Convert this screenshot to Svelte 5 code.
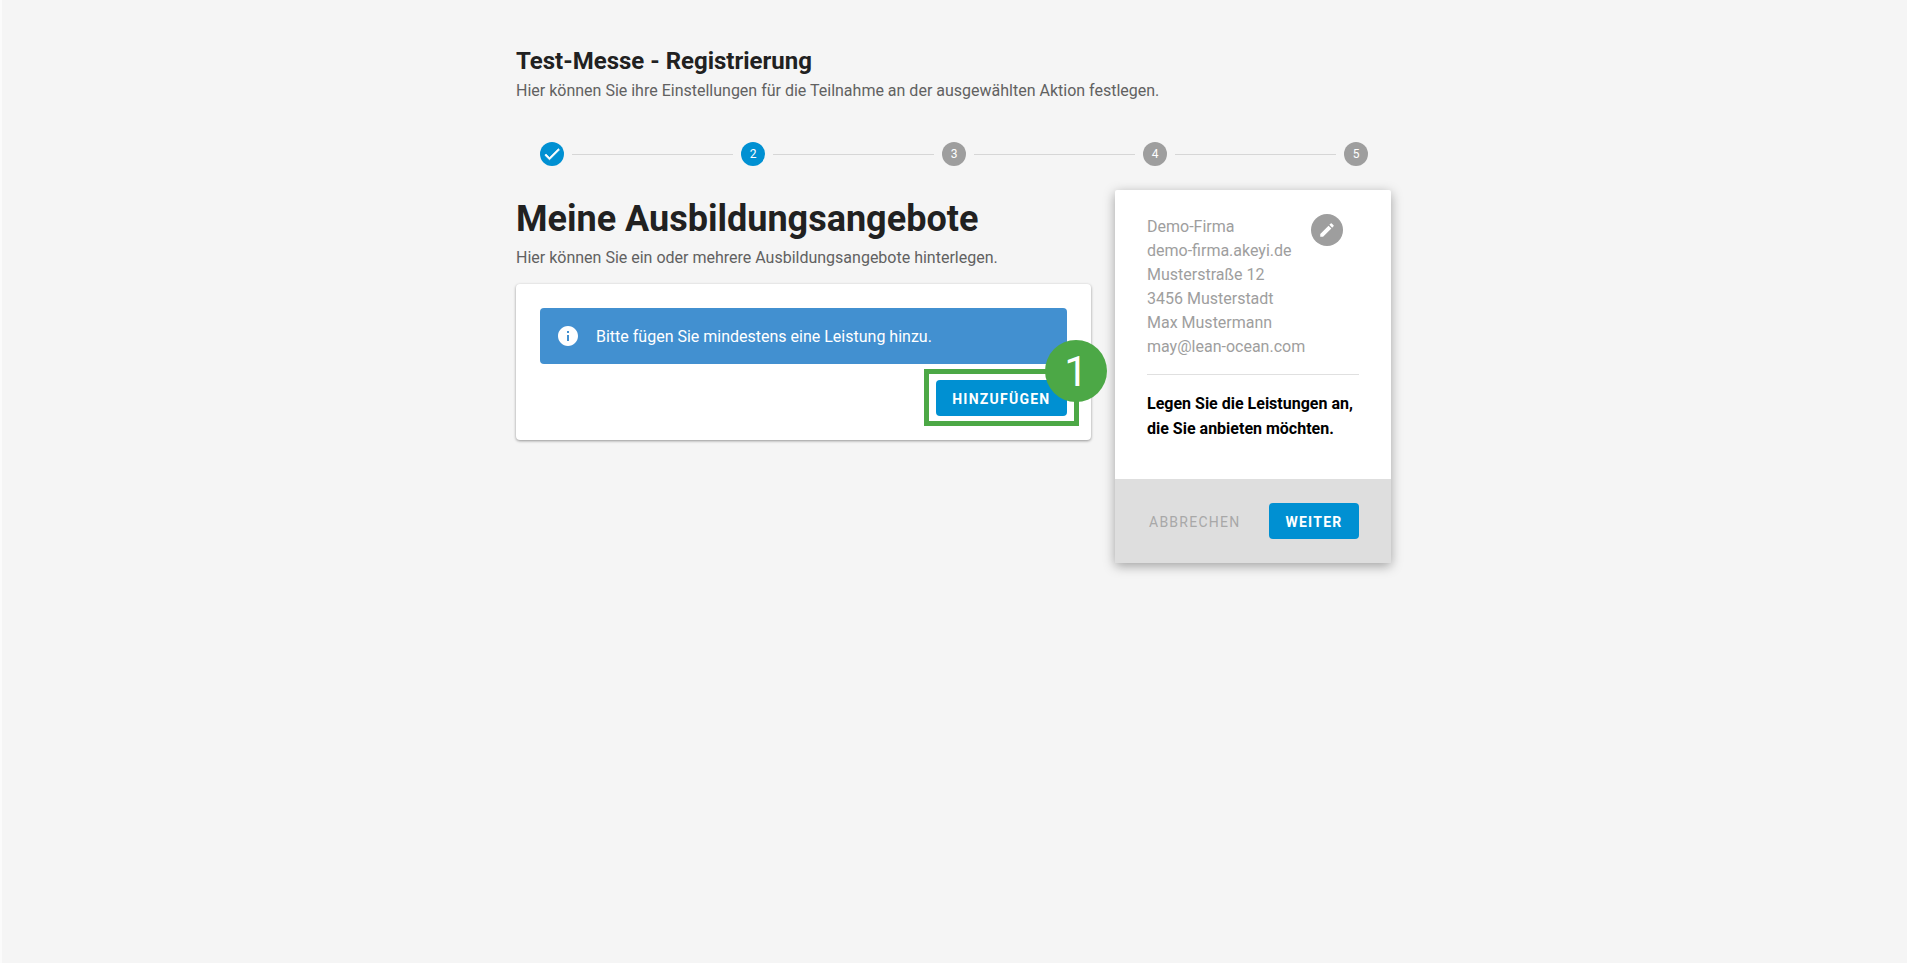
<script lang="ts">
    const steps = [
        { label: '1', done: true },
        { label: '2', active: true },
        { label: '3' },
        { label: '4' },
        { label: '5' }
    ];

    const company = [
        'Demo-Firma',
        'demo-firma.akeyi.de',
        'Musterstraße 12',
        '3456 Musterstadt',
        'Max Mustermann',
        'may@lean-ocean.com'
    ];
</script>

<div class="page">
    <main class="content">
        <header class="head">
            <h2>Test-Messe - Registrierung</h2>
            <p>Hier können Sie ihre Einstellungen für die Teilnahme an der ausgewählten Aktion festlegen.</p>
        </header>

        <ol class="stepper">
            {#each steps as step, i}
                {#if i > 0}<li class="line"></li>{/if}
                <li class="step" class:on={step.done || step.active}>
                    {#if step.done}
                        <svg viewBox="0 0 24 24" width="20" height="20"><path fill="#fff" stroke="#fff" stroke-width=".8" d="M9 16.17 4.83 12l-1.42 1.41L9 19 21 7l-1.41-1.41z"/></svg>
                    {:else}
                        {step.label}
                    {/if}
                </li>
            {/each}
        </ol>

        <div class="columns">
            <section class="left">
                <h1>Meine Ausbildungsangebote</h1>
                <p class="sub">Hier können Sie ein oder mehrere Ausbildungsangebote hinterlegen.</p>

                <div class="card">
                    <div class="alert">
                        <svg viewBox="0 0 24 24" width="24" height="24"><path fill="#fff" d="M12 2C6.48 2 2 6.48 2 12s4.48 10 10 10 10-4.48 10-10S17.52 2 12 2zm1 15h-2v-6h2v6zm0-8h-2V7h2v2z"/></svg>
                        <span>Bitte fügen Sie mindestens eine Leistung hinzu.</span>
                    </div>
                    <div class="actions">
                        <div class="marker">
                            <button class="btn">Hinzufügen</button>
                            <span class="badge">1</span>
                        </div>
                    </div>
                </div>
            </section>

            <aside class="side">
                <div class="side-body">
                    <div class="address">
                        {#each company as row}
                            <div>{row}</div>
                        {/each}
                        <span class="edit">
                            <svg viewBox="0 0 24 24" width="18" height="18"><path fill="#fff" d="M3 17.25V21h3.75L17.81 9.94l-3.75-3.75L3 17.25zM20.71 7.04a1 1 0 0 0 0-1.41l-2.34-2.34a1 1 0 0 0-1.41 0l-1.83 1.83 3.75 3.75 1.83-1.83z"/></svg>
                        </span>
                    </div>
                    <hr />
                    <p class="hint">Legen Sie die Leistungen an, die Sie anbieten möchten.</p>
                </div>
                <div class="side-foot">
                    <button class="btn flat">Abbrechen</button>
                    <button class="btn">Weiter</button>
                </div>
            </aside>
        </div>
    </main>
</div>

<style>
    :global(body) {
        margin: 0;
        background: #f5f5f5;
    }

    .page {
        min-height: 963px;
        box-sizing: border-box;
        display: flex;
        justify-content: center;
        font-family: Roboto, "Liberation Sans", sans-serif;
        color: #212121;
        font-size: 16px;
        border-left: 2px solid #fbfbfb;
    }

    .content {
        width: 875px;
        margin-right: 2px;
        padding-top: 46px;
    }

    .head h2 {
        margin: 0;
        font-size: 24px;
        font-weight: 700;
        line-height: 30px;
    }

    .head p {
        margin: 5px 0 0;
        line-height: 20px;
        color: #616161;
    }

    .stepper {
        list-style: none;
        margin: 41px 0 0;
        padding: 0 23px 0 24px;
        display: flex;
        align-items: center;
        gap: 8px;
    }

    .step {
        width: 24px;
        height: 24px;
        border-radius: 50%;
        background: #9e9e9e;
        color: #fff;
        font-size: 12px;
        display: flex;
        align-items: center;
        justify-content: center;
        flex: none;
    }

    .step.on {
        background: #0090d2;
    }

    .line {
        flex: 1;
        height: 1px;
        background: #d6d6d6;
    }

    .columns {
        display: flex;
        align-items: flex-start;
        justify-content: space-between;
        margin-top: 24px;
    }

    .left {
        width: 575px;
    }

    h1 {
        margin: 7px 0 0;
        font-size: 36px;
        font-weight: 700;
        line-height: 44px;
    }

    .sub {
        margin: 5px 0 0;
        line-height: 24px;
        color: #616161;
    }

    .card {
        margin-top: 14px;
        background: #fff;
        border-radius: 4px;
        padding: 24px;
        box-shadow: 0 1px 3px rgba(0, 0, 0, .4);
    }

    .alert {
        display: flex;
        align-items: center;
        gap: 16px;
        height: 56px;
        padding: 0 16px;
        background: #4290d0;
        border-radius: 4px;
        color: #fff;
    }

    .actions {
        display: flex;
        justify-content: flex-end;
        margin-top: 16px;
    }

    .marker {
        display: flex;
        position: relative;
    }

    /* green frame sits over the button */
    .marker::before {
        content: '';
        position: absolute;
        inset: -11px -12px -10px -12px;
        border: 5px solid #4ca846;
        pointer-events: none;
    }

    .badge {
        position: absolute;
        right: -40px;
        top: -40px;
        width: 62px;
        height: 62px;
        border-radius: 50%;
        background: #4ca846;
        color: #fff;
        font-size: 42px;
        display: flex;
        align-items: center;
        justify-content: center;
    }

    .btn {
        height: 36px;
        border: 0;
        border-radius: 4px;
        padding: 1px 16.5px 0;
        background: #0090d2;
        color: #fff;
        font: 700 14px Roboto, sans-serif;
        letter-spacing: 1.25px;
        text-transform: uppercase;
    }

    .btn.flat {
        padding: 1px 2px 0;
        background: none;
        color: #a8a8a8;
        font-weight: 400;
    }

    .side {
        width: 276px;
        background: #fff;
        border-radius: 2px;
        box-shadow: 0 3px 12px rgba(0, 0, 0, .35);
    }

    .side-body {
        padding: 25px 32px 38px;
    }

    .address {
        position: relative;
        color: #9e9e9e;
        line-height: 24px;
    }

    .edit {
        position: absolute;
        right: 16px;
        top: -1px;
        width: 32px;
        height: 32px;
        border-radius: 50%;
        background: #9e9e9e;
        display: flex;
        align-items: center;
        justify-content: center;
    }

    hr {
        margin: 15px 0 16px;
        border: 0;
        border-top: 1px solid #e0e0e0;
    }

    .hint {
        margin: 0;
        font-weight: 700;
        line-height: 25px;
        color: #000;
    }

    .side-foot {
        display: flex;
        align-items: center;
        justify-content: space-between;
        background: #dedede;
        padding: 24px 32px;
    }
</style>
